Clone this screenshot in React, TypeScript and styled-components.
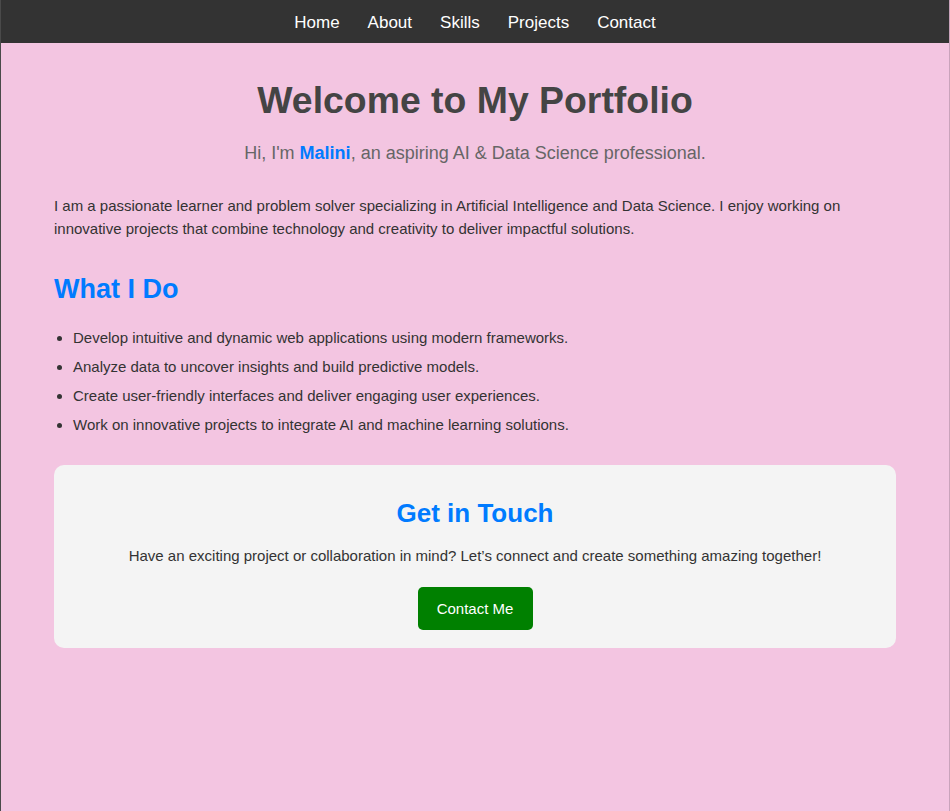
import React from "react";
import styled, { createGlobalStyle } from "styled-components";

const Global = createGlobalStyle`
  html, body { margin: 0; padding: 0; }
  body {
    background: #f3c5e1;
    font-family: "Liberation Sans", Arial, sans-serif;
    color: #333;
  }
`;

const Page = styled.div`
  min-height: 811px;
  box-sizing: border-box;
  border-left: 1px solid #4a4a4a;
  border-right: 1px solid #c9a3bb;
`;

const Nav = styled.nav`
  height: 43px;
  box-sizing: border-box;
  padding-top: 2px;
  background: #333;
  display: flex;
  justify-content: center;
  align-items: center;
  gap: 28px;
`;

const NavLink = styled.a`
  color: #fff;
  font-size: 17px;
  text-decoration: none;
`;

const Main = styled.main`
  padding: 0 53px;
`;

const Title = styled.h1`
  margin: 36px 0 0;
  text-align: center;
  font-size: 37.4px;
  font-weight: bold;
  color: #444;
`;

const Subtitle = styled.p`
  margin: 21px 0 0;
  text-align: center;
  font-size: 18px;
  color: #666;
`;

const Name = styled.span`
  color: #007bff;
  font-weight: bold;
`;

const Intro = styled.p`
  margin: 30px 0 0;
  font-size: 15px;
  line-height: 23px;
  color: #333;
`;

const SectionTitle = styled.h2`
  margin: 34px 0 0;
  font-size: 27px;
  font-weight: bold;
  color: #007bff;
`;

const List = styled.ul`
  margin: 23px 0 0;
  padding-left: 19px;
`;

const Item = styled.li`
  font-size: 15px;
  line-height: 19px;
  color: #333;
  margin-bottom: 10px;
`;

const Card = styled.section`
  margin-top: 31px;
  background: #f4f4f4;
  border-radius: 10px;
  padding: 33px 20px 18px;
  text-align: center;
`;

const CardTitle = styled.h2`
  margin: 0;
  font-size: 26px;
  font-weight: bold;
  color: #007bff;
`;

const CardText = styled.p`
  margin: 18px 0 0;
  font-size: 15px;
  color: #333;
`;

const Button = styled.button`
  margin-top: 23px;
  width: 115px;
  height: 43px;
  background: #008000;
  color: #fff;
  border: none;
  border-radius: 5px;
  font-family: "Liberation Sans", Arial, sans-serif;
  font-size: 15px;
  cursor: pointer;
`;

const links = ["Home", "About", "Skills", "Projects", "Contact"];
const items = [
  "Develop intuitive and dynamic web applications using modern frameworks.",
  "Analyze data to uncover insights and build predictive models.",
  "Create user-friendly interfaces and deliver engaging user experiences.",
  "Work on innovative projects to integrate AI and machine learning solutions.",
];

export default function App() {
  return (
    <Page>
      <Global />
      <Nav>
        {links.map((l) => (
          <NavLink key={l} href="#">
            {l}
          </NavLink>
        ))}
      </Nav>
      <Main>
        <Title>Welcome to My Portfolio</Title>
        <Subtitle>
          Hi, I'm <Name>Malini</Name>, an aspiring AI &amp; Data Science professional.
        </Subtitle>
        <Intro>
          I am a passionate learner and problem solver specializing in Artificial Intelligence and Data
          Science. I enjoy working on innovative projects that combine technology and creativity to deliver
          impactful solutions.
        </Intro>
        <SectionTitle>What I Do</SectionTitle>
        <List>
          {items.map((i) => (
            <Item key={i}>{i}</Item>
          ))}
        </List>
        <Card>
          <CardTitle>Get in Touch</CardTitle>
          <CardText>
            Have an exciting project or collaboration in mind? Let’s connect and create something amazing
            together!
          </CardText>
          <Button>Contact Me</Button>
        </Card>
      </Main>
    </Page>
  );
}
